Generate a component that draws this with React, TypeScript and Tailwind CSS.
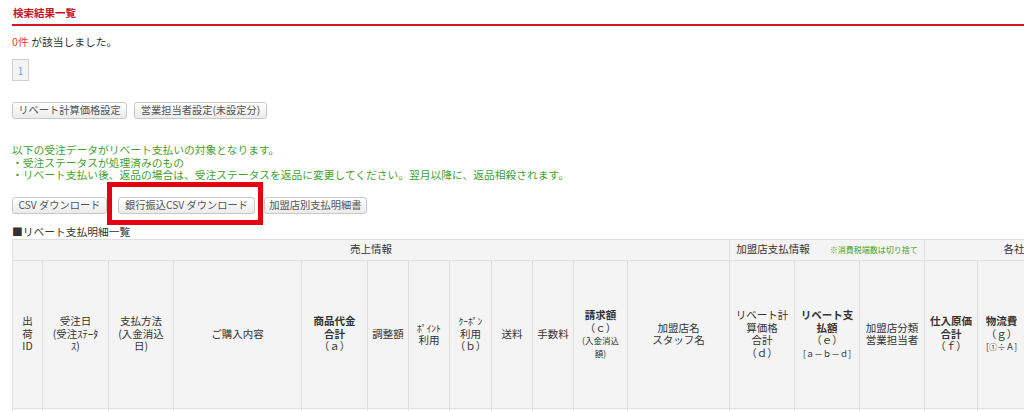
import React from "react";

const btn =
  "h-[17px] flex items-center justify-center rounded-[3px] border border-[#c8c8c8] bg-gradient-to-b from-white to-[#ebebeb] text-[10.25px] text-[#555] leading-none whitespace-nowrap";

const cols = [30, 66, 65, 128, 66, 41, 41, 42, 41, 41, 54, 102, 65, 65, 65, 53, 48, 60, 60];

const th = "border border-[#dedede] bg-[#f3f4f3] text-center align-middle font-normal px-[1px]";

export default function App() {
  const total = cols.reduce((a, b) => a + b, 0);
  return (
    <div className="w-[1024px] h-[411px] overflow-hidden bg-white text-[#333] font-['Noto_Sans_CJK_JP','Noto_Sans',sans-serif]">
      <div className="pl-[12px] pt-[5px]">
        <h2 className="pl-[1px] text-[10.5px] leading-[16px] font-bold text-[#c8161d]">検索結果一覧</h2>
        <div className="mt-[3px] h-[2px] bg-[#d7191f]" />

        <p className="mt-[8px] text-[10.75px] leading-[16px]">
          <span className="text-[#f23c3c]">0件</span> が該当しました。
        </p>

        <div className="mt-[9px] w-[17px] h-[22px] border border-[#cfcfcf] bg-[#f4f4f4] flex items-center justify-center text-[10px] text-[#6aa6d6]">
          1
        </div>

        <div className="mt-[21px] flex gap-[7px]">
          <button className={`${btn} w-[115px]`}>リベート計算価格設定</button>
          <button className={`${btn} w-[133px]`}>営業担当者設定(未設定分)</button>
        </div>

        <div className="mt-[25px] text-[10.75px] leading-[12.5px] text-[#3f9f2f]">
          <p>以下の受注データがリベート支払いの対象となります。</p>
          <p>・受注ステータスが処理済みのもの</p>
          <p>・リベート支払い後、返品の場合は、受注ステータスを返品に変更してください。翌月以降に、返品相殺されます。</p>
        </div>

        <div className="mt-[15px] flex items-center">
          <button className={`${btn} w-[95px]`}>CSV ダウンロード</button>
          <div className="relative ml-[11px]">
            <button className={`${btn} w-[137px]`}>銀行振込CSV ダウンロード</button>
            <div className="absolute -left-[11px] -right-[8px] -top-[15px] -bottom-[11px] border-[5px] border-[#e50012]" />
          </div>
          <button className={`${btn} w-[103px] ml-[9px]`}>加盟店別支払明細書</button>
        </div>

        <p className="mt-[12px] text-[10.75px] leading-[12px]">■リベート支払明細一覧</p>

        <table
          className="mt-[1px] table-fixed border-collapse text-[10.5px] leading-[12.5px] text-[#333]"
          style={{ width: total }}
        >
          <colgroup>
            {cols.map((w, i) => (
              <col key={i} style={{ width: w }} />
            ))}
          </colgroup>
          <thead>
            <tr className="h-[21px]">
              <th colSpan={12} className={th}>売上情報</th>
              <th colSpan={3} className={th}>
                加盟店支払情報
                <span className="ml-[20px] text-[8px] text-[#3f9f2f]">※消費税端数は切り捨て</span>
              </th>
              <th colSpan={4} className={th}>各社支払情報</th>
            </tr>
            <tr className="h-[148px]">
              <th className={th}>出<br />荷<br />ID</th>
              <th className={th}>受注日<br />(受注ｽﾃｰﾀ<br />ｽ)</th>
              <th className={th}>支払方法<br />(入金消込<br />日)</th>
              <th className={th}>ご購入内容</th>
              <th className={th}>
                <b>商品代金<br />合計</b>
                <br />（ａ）
              </th>
              <th className={th}>調整額</th>
              <th className={th}>
                <span className="text-[9.5px]">ﾎﾟｲﾝﾄ</span>
                <br />利用
              </th>
              <th className={th}>
                <span className="text-[9.5px]">ｸｰﾎﾟﾝ</span>
                <br />利用<br />（ｂ）
              </th>
              <th className={th}>送料</th>
              <th className={th}>手数料</th>
              <th className={th}>
                <b>請求額</b>
                <br />（ｃ）
                <br />
                <span className="text-[8.5px] leading-[11px]">(入金消込<br />額)</span>
              </th>
              <th className={th}>加盟店名<br />スタッフ名</th>
              <th className={th}>リベート計<br />算価格<br />合計<br />（ｄ）</th>
              <th className={th}>
                <b>リベート支<br />払額</b>
                <br />（ｅ）
                <br />
                <span className="text-[8.5px]">[ａ－ｂ－ｄ]</span>
              </th>
              <th className={th}>加盟店分類<br />営業担当者</th>
              <th className={th}>
                <b>仕入原価<br />合計</b>
                <br />（ｆ）
              </th>
              <th className={th}>
                <b>物流費</b>
                <br />（ｇ）
                <br />
                <span className="text-[8.5px]">[①÷Ａ]</span>
              </th>
              <th className={th}>&nbsp;</th>
              <th className={th}>&nbsp;</th>
            </tr>
          </thead>
          <tbody>
            <tr className="h-[30px]">
              {cols.map((_, i) => (
                <td key={i} className="border border-[#dedede] bg-white" />
              ))}
            </tr>
          </tbody>
        </table>
      </div>
    </div>
  );
}
